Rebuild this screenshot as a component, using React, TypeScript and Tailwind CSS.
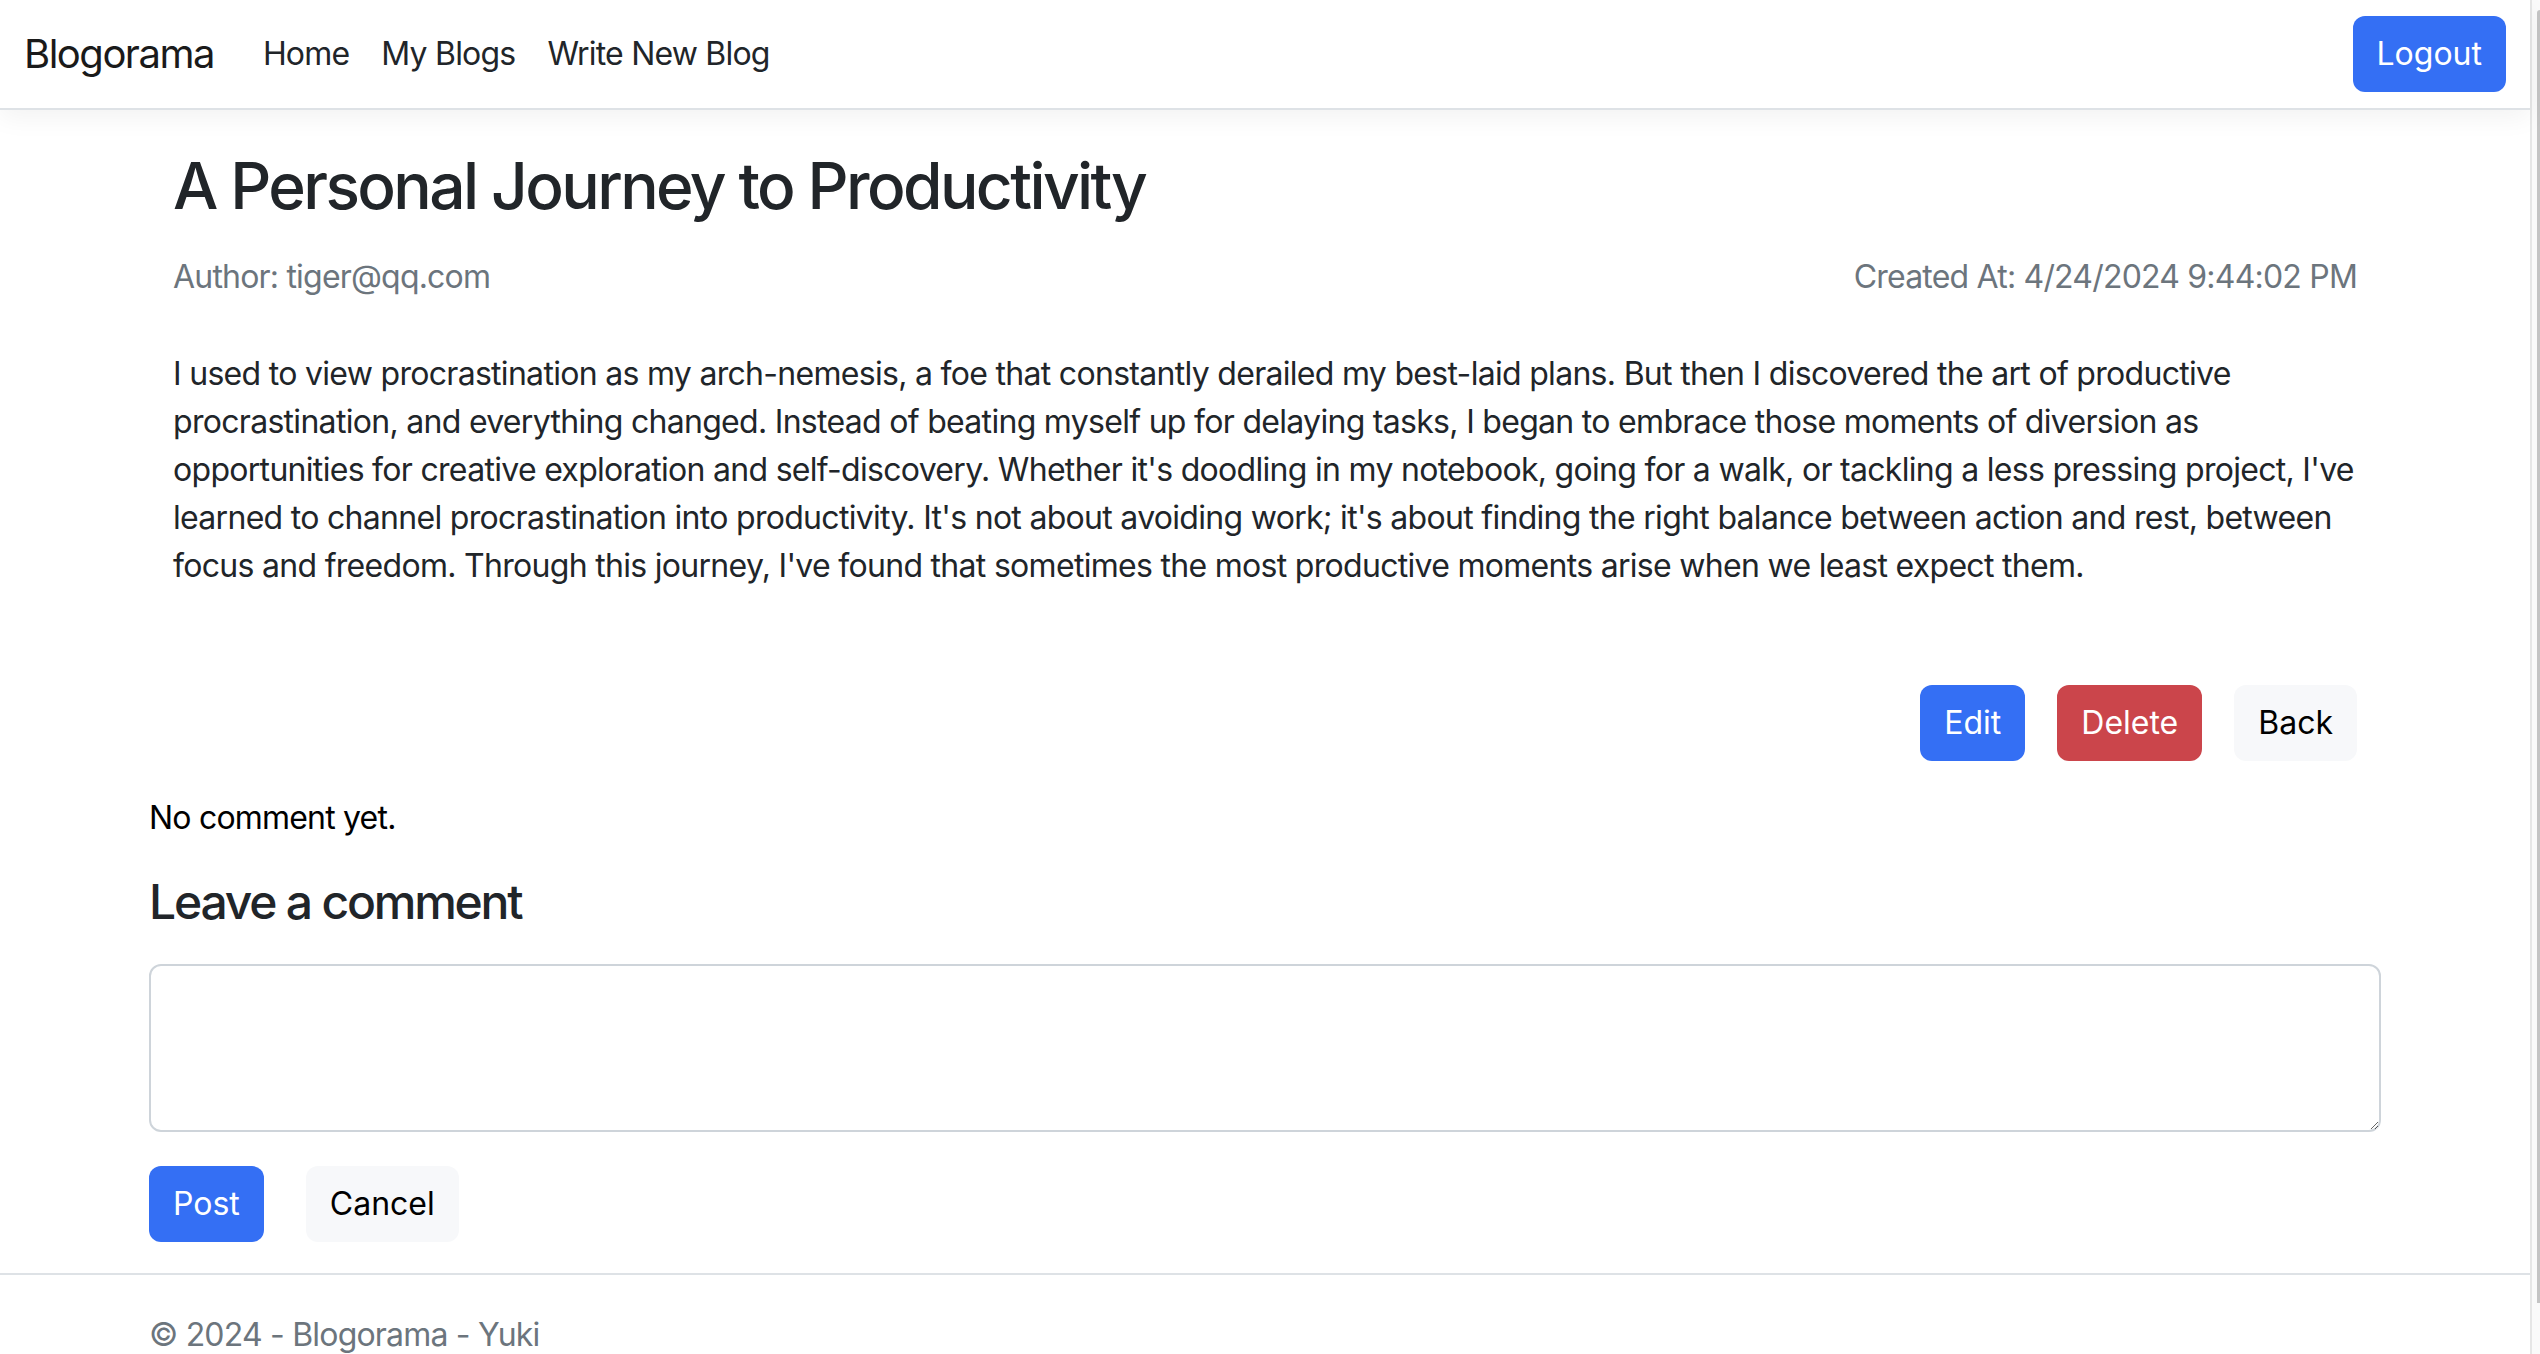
import { useState } from "react";

const body =
  "I used to view procrastination as my arch-nemesis, a foe that constantly derailed my best-laid plans. But then I discovered the art of productive procrastination, and everything changed. Instead of beating myself up for delaying tasks, I began to embrace those moments of diversion as opportunities for creative exploration and self-discovery. Whether it's doodling in my notebook, going for a walk, or tackling a less pressing project, I've learned to channel procrastination into productivity. It's not about avoiding work; it's about finding the right balance between action and rest, between focus and freedom. Through this journey, I've found that sometimes the most productive moments arise when we least expect them.";

const btn = "h-[76px] px-6 rounded-[12px] text-[32px] tracking-normal";

export default function App() {
  const [comment, setComment] = useState("");

  return (
    <div className="flex h-screen overflow-hidden bg-white font-[Inter,'Noto_Sans',sans-serif] text-[#212529] tracking-[-0.8px]">
      <div className="flex-1 min-w-0 flex flex-col">
        {/* NAVBAR */}
        <nav className="relative z-10 h-[110px] shrink-0 flex items-center justify-between px-6 bg-white border-b-2 border-[#dee2e6] shadow-[0_8px_24px_rgba(0,0,0,0.05)]">
          <div className="flex items-center">
            <a href="#" className="text-[40px] leading-[60px] text-[#1a1a1a] tracking-[-1.5px] mr-[33px]">
              Blogorama
            </a>
            <a href="#" className="text-[32px] leading-[48px] px-4">Home</a>
            <a href="#" className="text-[32px] leading-[48px] px-4">My Blogs</a>
            <a href="#" className="text-[32px] leading-[48px] px-4">Write New Blog</a>
          </div>
          <button className={`${btn} bg-[#346ff4] text-white`}>Logout</button>
        </nav>

        {/* CONTENT */}
        <main className="px-[149px]">
          <div className="px-6">
            <h1 className="mt-[37px] text-[64px] leading-[77px] font-medium tracking-[-2.6px]">
              A Personal Journey to Productivity
            </h1>
            <div className="mt-[29px] flex justify-between text-[32px] leading-[48px] text-[#6c757d]">
              <span>Author: tiger@qq.com</span>
              <span>Created At: 4/24/2024 9:44:02 PM</span>
            </div>
            <p className="mt-[49px] text-[32px] leading-[48px] tracking-[-0.7px]">{body}</p>
            <div className="mt-[95px] flex justify-end gap-8">
              <button className={`${btn} bg-[#346ff4] text-white`}>Edit</button>
              <button className={`${btn} bg-[#cb454b] text-white`}>Delete</button>
              <button className={`${btn} bg-[#f7f8fa] text-black`}>Back</button>
            </div>
          </div>

          <p className="mt-[33px] text-[32px] leading-[48px] text-black">No comment yet.</p>
          <h4 className="mt-[31px] text-[48px] leading-[58px] font-medium tracking-[-2.2px]">
            Leave a comment
          </h4>
          <textarea
            value={comment}
            onChange={(e) => setComment(e.target.value)}
            className="mt-[33px] block w-full h-[168px] border-2 border-[#ced4da] rounded-[12px] px-6 py-3 text-[32px] outline-none"
          />
          <div className="mt-[34px] flex gap-[42px]">
            <button className={`${btn} bg-[#346ff4] text-white`}>Post</button>
            <button onClick={() => setComment("")} className={`${btn} bg-[#f7f8fa] text-black`}>
              Cancel
            </button>
          </div>
        </main>

        {/* FOOTER */}
        <footer className="mt-[31px] border-t-2 border-[#dee2e6] px-[149px] pt-[36px] text-[32px] leading-[48px] text-[#6c757d]">
          © 2024 - Blogorama - Yuki
        </footer>
      </div>

      {/* scrollbar strip */}
      <div className="w-[10px] shrink-0 border-l-2 border-[#e6e6e6] bg-[#fafafa] flex justify-end pt-[10px]">
        <div className="w-[3px] h-[1293px] rounded-tl-[3px] bg-[#c4c4c4]" />
      </div>
    </div>
  );
}
